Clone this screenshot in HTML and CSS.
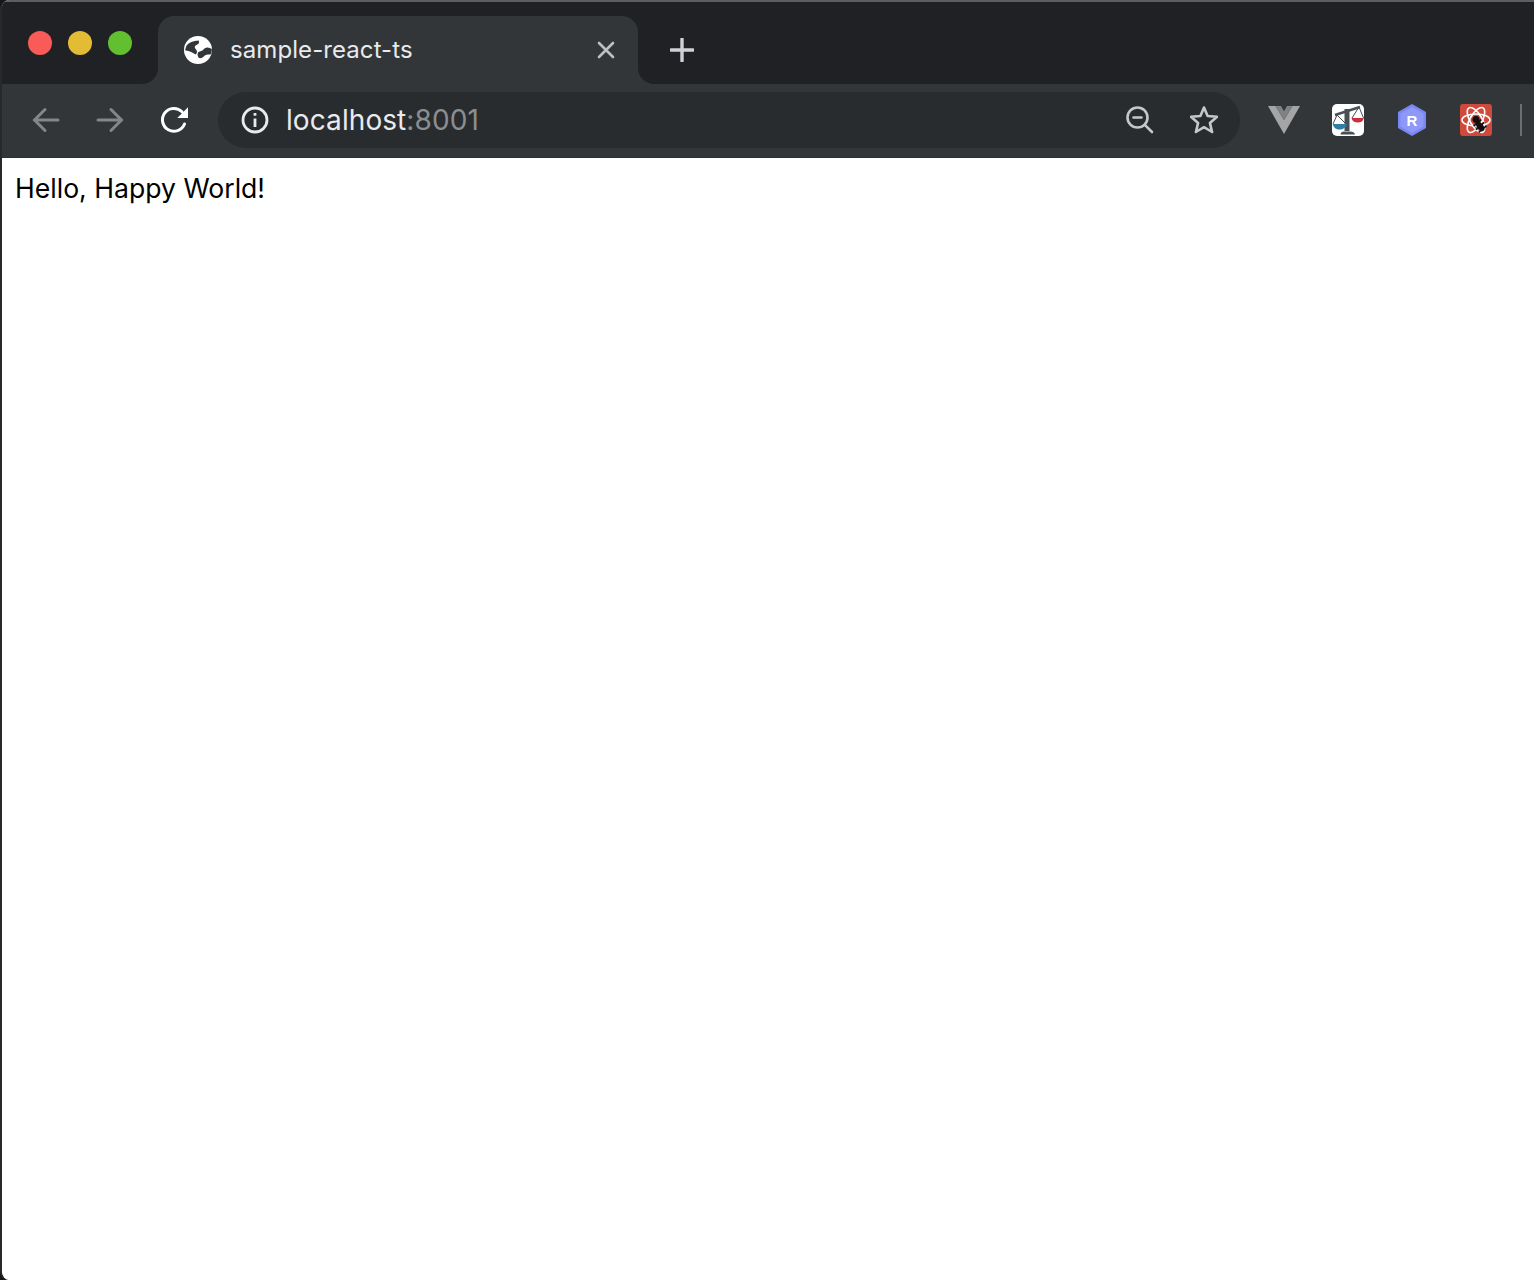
FILE: index.html
```html
<!DOCTYPE html>
<html lang="en">
<head>
<meta charset="utf-8">
<title>sample-react-ts</title>
<link rel="stylesheet" href="styles.css">
</head>
<body>
<div class="window">
  <header class="tabstrip">
    <div class="lights">
      <span class="light red"></span>
      <span class="light yellow"></span>
      <span class="light green"></span>
    </div>
    <div class="tab">
      <svg class="globe" viewBox="0 0 28 28">
        <circle cx="14" cy="14" r="14" fill="#fff"/>
        <path fill="#323639" d="M2.500 9.500C5 6.500 9 4.800 14.500 4.500 16 6.500 14.500 8 12.500 9 10.500 10 10 11.500 12 13.500 13.500 15 13.300 17.500 11.500 18.500 9 17 6 14.700 1 14.200Z"/>
        <path fill="#323639" d="M27.900 13C25 11 22 11 20 13 18.500 15 16 15 14.500 16 13 17 13.500 20.500 15 22 17 22.500 19 21.500 20.500 19.800 22 18 25.500 19 27.300 18Z"/>
      </svg>
      <span class="tab-title">sample-react-ts</span>
      <svg class="tab-close" viewBox="0 0 18 18"><path d="M2 2 16 16M16 2 2 16"/></svg>
    </div>
    <div class="strip-rest">
      <svg class="new-tab" viewBox="0 0 24 24"><path d="M12 1V23M1 12H23"/></svg>
    </div>
  </header>
  <nav class="toolbar">
    <button class="tool" type="button" aria-label="Back">
      <svg class="nav-icon dim" viewBox="0 0 28 28"><path d="M26 14H3M13 3.500 2.500 14 13 24.500"/></svg>
    </button>
    <button class="tool" type="button" aria-label="Forward">
      <svg class="nav-icon dim" viewBox="0 0 28 28"><path d="M2 14H25M15 3.500 25.500 14 15 24.500"/></svg>
    </button>
    <button class="tool" type="button" aria-label="Reload">
      <svg class="nav-icon" viewBox="0 0 28 28">
        <path d="M24.500 18A11.400 11.400 0 1 1 22 5.800"/>
        <path class="solid" d="M28 1.300V12H17.300Z"/>
      </svg>
    </button>
    <div class="omnibox">
      <svg class="info" viewBox="0 0 28 28">
        <circle cx="14" cy="14" r="12"/>
        <path d="M14 12.500V21M14 7V9.800"/>
      </svg>
      <span class="url"><span class="host">localhost</span><span class="port">:8001</span></span>
      <svg class="omni-icon zoom" viewBox="0 0 28 28">
        <circle cx="11.500" cy="11.500" r="10"/>
        <path d="M7.500 11.500H15.500M18.800 18.800 26 26"/>
      </svg>
      <svg class="omni-icon star" viewBox="0 0 28 28">
        <path d="M14 1.500 17.600 10 27 10.800 19.900 16.900 22.100 26 14 21.200 5.900 26 8.100 16.900 1 10.800 10.400 10Z"/>
      </svg>
    </div>
    <div class="extensions">
      <button class="ext" type="button" aria-label="Vue devtools">
        <svg width="32" height="28" viewBox="0 0 32 28">
          <path fill="#a3a5a6" d="M0 0H7.600L16 14 24.400 0H32L16 28Z"/>
          <path fill="#7f8183" d="M7.600 0H13L16 5.200 19 0H24.400L16 14Z"/>
        </svg>
      </button>
      <button class="ext" type="button" aria-label="Scales">
        <svg width="32" height="32" viewBox="0 0 32 32">
          <rect width="32" height="32" rx="5" fill="#fff"/>
          <path fill="none" stroke="#4a4f53" stroke-width="2.400" d="M3 11 28 3"/>
          <path fill="#4a4f53" d="M12.500 5H17.500V27H12.500ZM8.500 30.500C8.500 28.500 10 27.500 12 27.500H18C20.500 27.500 23 28.500 23 30.500Z"/>
          <path fill="none" stroke="#4a4f53" stroke-width="1" d="M5 11 1 20M5 11 14 20M27 3 20 14M27 3 31.500 14"/>
          <path fill="#2f7ea8" d="M.8 20H14.800C14.300 23.500 11 25.500 7.500 25.500S1.300 23.500.8 20Z"/>
          <path fill="#c9303e" d="M19.500 14H31.800C31.300 17 29 18.500 25.800 18.500S20 17 19.500 14Z"/>
        </svg>
      </button>
      <button class="ext" type="button" aria-label="Relay">
        <svg width="28" height="32" viewBox="0 0 28 32">
          <path fill="#7a86f2" d="M14 0 28 8V24L14 32 0 24V8Z"/>
          <path fill="#8d98f7" d="M14 3 25.500 9.500V22.500L14 29 2.500 22.500V9.500Z"/>
          <text class="ext-r" x="14" y="21.500" text-anchor="middle">R</text>
        </svg>
      </button>
      <button class="ext" type="button" aria-label="React bug">
        <svg width="32" height="32" viewBox="0 0 32 32">
          <rect width="32" height="32" rx="3" fill="#d04a3c"/>
          <g fill="none" stroke="#fff" stroke-width="1.600">
            <ellipse cx="16" cy="16" rx="14" ry="6"/>
            <ellipse cx="16" cy="16" rx="14" ry="6" transform="rotate(60 16 16)"/>
            <ellipse cx="16" cy="16" rx="14" ry="6" transform="rotate(120 16 16)"/>
          </g>
          <circle cx="16" cy="15.500" r="3.500" fill="#111"/>
          <g transform="rotate(-40 20 22)" stroke="#111" stroke-width="1.600">
            <ellipse cx="20" cy="22" rx="3" ry="6" fill="#111" stroke="none"/>
            <path d="M15 18H25M14.500 22H25.500M15 26H25"/>
          </g>
        </svg>
      </button>
    </div>
    <span class="separator"></span>
  </nav>
  <main class="page">Hello, Happy World!</main>
</div>
</body>
</html>
```
FILE: styles.css
```css
* { box-sizing: border-box; }
html, body { margin: 0; height: 100%; background: #161718; }
body { overflow: hidden; }

.window {
  height: 1280px;
  display: flex;
  flex-direction: column;
  border-left: 2px solid #26282a;
  border-radius: 9px 0 0 9px;
  overflow: hidden;
  background: #fff;
}

.tabstrip {
  height: 84px;
  flex: none;
  display: flex;
  border-top: 2px solid #5c5e60;
  background: linear-gradient(#202124 50%, #323639 50%);
}

.lights {
  width: 156px;
  flex: none;
  display: flex;
  gap: 16px;
  padding: 29px 0 0 26px;
  background: #202124;
  border-bottom-right-radius: 16px;
}
.light { width: 24px; height: 24px; border-radius: 50%; }
.red { background: #f95c58; }
.yellow { background: #e2bc35; }
.green { background: #62c030; }

.tab {
  width: 480px;
  flex: none;
  margin-top: 14px;
  display: flex;
  align-items: center;
  padding: 0 23px 0 26px;
  background: #323639;
  border-radius: 16px 16px 0 0;
}
.globe { width: 28px; height: 28px; flex: none; }
.tab-title {
  flex: 1;
  margin-left: 18px;
  font: 24px/32px Inter, "Liberation Sans", sans-serif;
  letter-spacing: .08px;
  color: #e8eaed;
}
.tab-close {
  width: 18px;
  height: 18px;
  flex: none;
  fill: none;
  stroke: #bdc0c4;
  stroke-width: 2.600;
  stroke-linecap: round;
}

.strip-rest {
  flex: 1;
  padding: 36px 0 0 32px;
  background: #202124;
  border-bottom-left-radius: 16px;
}
.new-tab {
  display: block;
  width: 24px;
  height: 24px;
  fill: none;
  stroke: #ced1d5;
  stroke-width: 3.400;
  stroke-linecap: round;
}

.toolbar {
  height: 74px;
  flex: none;
  display: flex;
  align-items: center;
  padding: 0 0 2px 12px;
  background: #323639;
  border-bottom: 1px solid #2a2c2e;
}
.tool, .ext {
  width: 64px;
  height: 56px;
  flex: none;
  display: flex;
  align-items: center;
  justify-content: center;
  padding: 0;
  border: 0;
  background: none;
}
.nav-icon {
  width: 28px;
  height: 28px;
  fill: none;
  stroke: #fff;
  stroke-width: 3;
  stroke-linecap: round;
}
.nav-icon.dim { stroke: #84878a; }
.nav-icon .solid { fill: #fff; stroke: none; }

.omnibox {
  width: 1022px;
  height: 56px;
  flex: none;
  margin-left: 12px;
  display: flex;
  align-items: center;
  padding: 0 22px 0 23px;
  background: #292c2f;
  border-radius: 28px;
}
.info {
  width: 28px;
  height: 28px;
  flex: none;
  fill: none;
  stroke: #e8eaed;
  stroke-width: 2.800;
}
.url {
  flex: 1;
  margin-left: 17px;
  font: 28px/36px Inter, "Liberation Sans", sans-serif;
  letter-spacing: .08px;
}
.host { color: #e8eaed; }
.port { color: #8b8e91; }
.omni-icon {
  width: 28px;
  height: 28px;
  flex: none;
  fill: none;
  stroke: #c5c8cb;
  stroke-width: 2.600;
  stroke-linecap: round;
}
.star { margin-left: 36px; stroke-linejoin: round; }

.extensions { margin-left: 12px; display: flex; flex: none; }
.ext-r {
  font: 700 15px "Liberation Sans", sans-serif;
  fill: #fff;
}
.separator {
  width: 2px;
  height: 32px;
  flex: none;
  margin-left: 12px;
  background: #6c6f72;
}

.page {
  flex: 1;
  padding: 13px 0 0 13px;
  font: 26.600px/34px Inter, "Liberation Sans", sans-serif;
  color: #000;
  background: #fff;
}
```
